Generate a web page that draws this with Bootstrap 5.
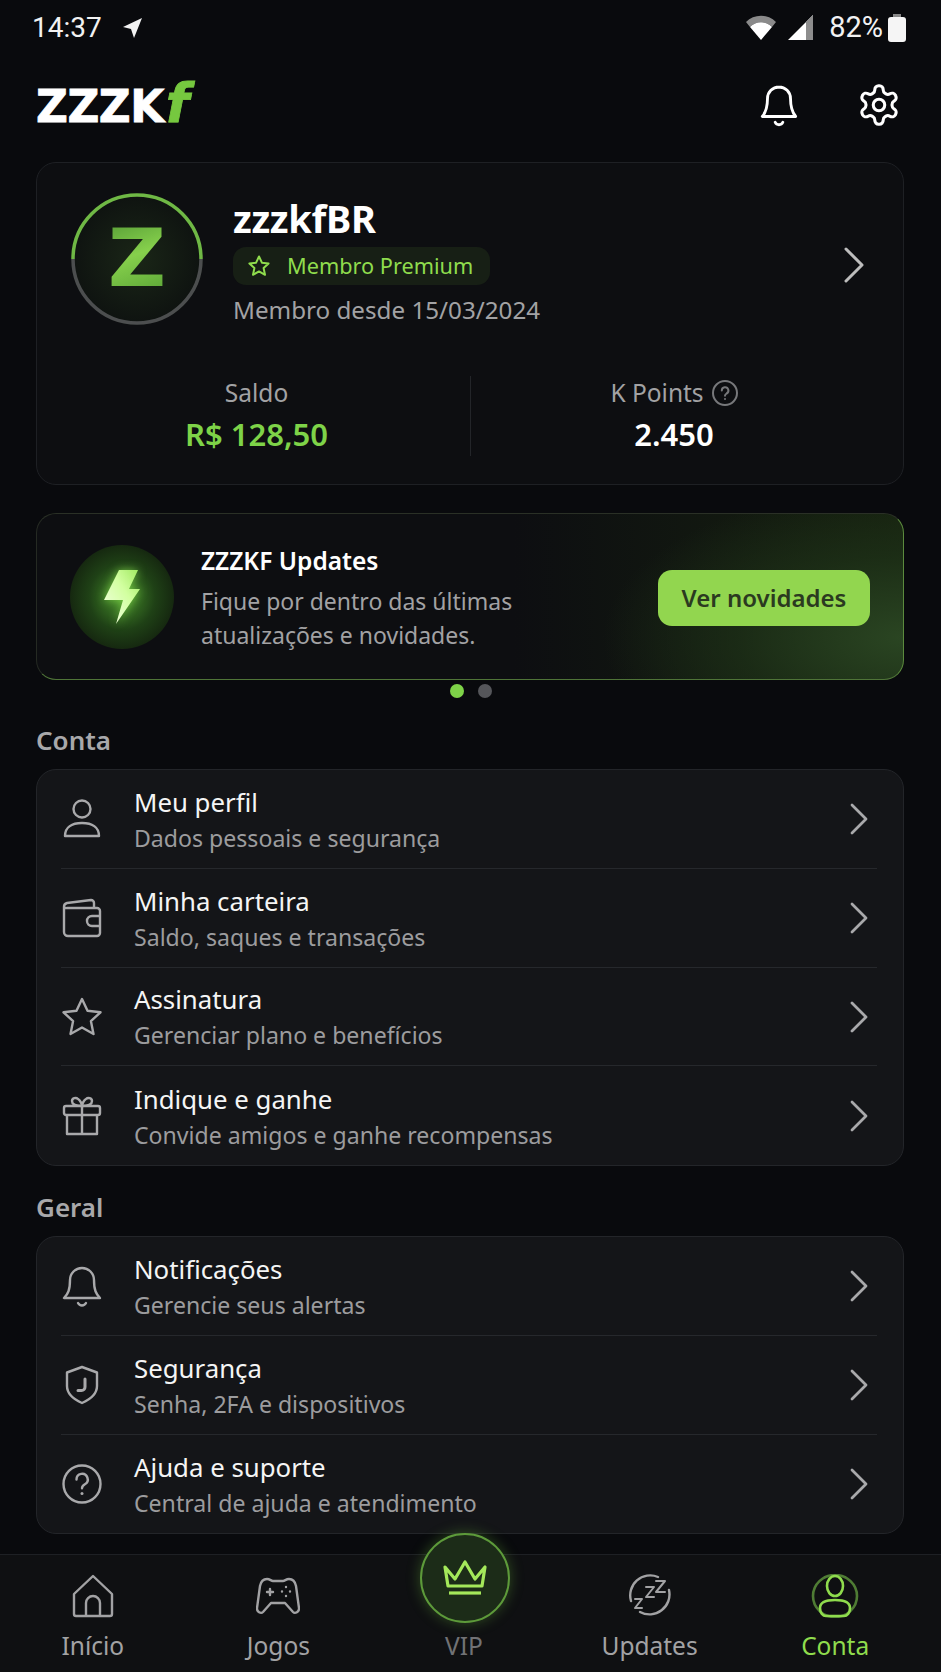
<!DOCTYPE html>
<html lang="pt-BR">
<head>
<meta charset="UTF-8">
<meta name="viewport" content="width=device-width, initial-scale=1.0">
<title>Conta</title>
<link href="https://cdn.jsdelivr.net/npm/bootstrap@5.3.0/dist/css/bootstrap.min.css" rel="stylesheet">
<style>
    body { background: #090a0d; color: #fff; font-family: "Noto Sans", sans-serif; width: 941px; height: 1672px; overflow: hidden; }
    svg { display: block; flex-shrink: 0; }
    .app-shell { height: 1672px; position: relative; }
    .status-bar { height: 55px; padding: 0 34px 0 32px; font-family: Roboto, sans-serif; font-size: 28px; color: #f2f2f2; }
    .status-pct { font-size: 29px; margin-left: 15px; }
    .gps-arrow { margin-left: 18px; }
    .signal-ico { margin-left: 11px; }
    .top-head { height: 107px; padding: 4px 36px 12px 36px; }
    .logo-mark { font-family: "DejaVu Sans", sans-serif; font-weight: 700; font-size: 44px; line-height: 54px; letter-spacing: -.5px; text-transform: uppercase; margin-top: 4px; -webkit-text-stroke: .8px #fff; }
    .logo-mark i { color: #76c83f; font-size: 54px; line-height: 40px; text-transform: none; margin-left: 2px; -webkit-text-stroke: .8px #76c83f; }
    .head-icons { gap: 54px; padding-right: 3px; }
    .panel-dark { background: #0d0e11; border: 1px solid #1e2024; border-radius: 20px; margin: 0 37px 0 36px; }
    .profile-panel { height: 323px; padding: 30px 37px 0 34px; }
    .avatar-ring { width: 132px; height: 132px; position: relative; background: radial-gradient(circle, #1a2617 0, #0e1210 72%); border-radius: 50%; }
    .avatar-ring svg { position: absolute; inset: 0; }
    .avatar-z { font-family: "DejaVu Sans", sans-serif; font-weight: 700; font-size: 80px; line-height: 1; background: linear-gradient(160deg, #5fa63a 10%, #86d04c 45%, #5ea838 90%); -webkit-background-clip: text; background-clip: text; color: transparent; }
    .user-block { margin-left: 30px; padding-top: 2px; }
    .user-name { font-size: 38px; font-weight: 700; line-height: 46px; letter-spacing: -.3px; }
    .premium-tag { background: #171f15; border-radius: 13px; height: 38px; width: 257px; padding-left: 14px; gap: 16px; color: #8fdc4d; font-size: 21.7px; margin-top: 6px; }
    .since-line { font-size: 24.2px; color: #a2a2a4; line-height: 30px; margin-top: 10px; }
    .chevron-big { margin-top: 52px; }
    .stat-row { margin: 51px 0 0 -28px; }
    .stat-cell { height: 80px; }
    .stat-left { width: 428px; border-right: 1px solid #232529; }
    .stat-right { width: 406px; }
    .stat-label { font-size: 24.5px; color: #a2a2a4; line-height: 34px; }
    .stat-value { font-size: 31px; font-weight: 600; line-height: 42px; margin-top: 3px; }
    .text-lime { color: #7ed348; }
    .promo-panel { margin-top: 28px; height: 167px; padding: 0 33px 0 33px; border-color: #2a3026 #5b8a3d #4f7438 #252a23; background: radial-gradient(ellipse 300px 150px at 100% 75%, #2a4522 0, rgba(30, 50, 24, .7) 55%, rgba(13, 14, 17, 0) 100%), linear-gradient(90deg, #0d0e11 55%, #16210f 100%); }
    .bolt-disc { width: 104px; height: 104px; border-radius: 50%; background: radial-gradient(circle, #47902b 0, #1f4116 45%, #14240f 75%, #0f170d 100%); }
    .bolt-disc svg { filter: drop-shadow(0 0 5px rgba(140, 230, 80, .7)); }
    .promo-text { margin-left: 27px; width: 440px; padding-top: 4px; }
    .promo-title { font-size: 24.5px; font-weight: 600; line-height: 32px; }
    .promo-sub { font-size: 23px; color: #a2a2a4; line-height: 34px; margin-top: 7px; }
    .novidades-btn { width: 212px; height: 56px; background: #92d64f; border: 0; border-radius: 14px; color: #2b3a20; font-size: 24px; font-weight: 600; margin-left: auto; margin-top: 2px; padding: 0; }
    .slide-dots { gap: 14px; margin-top: 4px; height: 14px; }
    .slide-dots span { width: 14px; height: 14px; border-radius: 50%; background: #55565a; }
    .slide-dots .on { background: #7ed348; }
    .group-title { font-size: 26px; font-weight: 600; color: #a8a8aa; margin: 25px 36px 0; line-height: 35px; height: 46px; }
    .group-second { margin-top: 24px; }
    .menu-panel { background: #141518; border: 1px solid #232529; border-radius: 20px; margin: 0 37px 0 36px; padding: 0 26px 0 24px; }
    .menu-row { height: 98.75px; border-bottom: 1px solid #26282c; padding-top: 1px; }
    .menu-row:last-child { border-bottom: 0; }
    .row-ico { width: 42px; margin-right: 31px; }
    .row-title { font-size: 25.8px; line-height: 34px; color: #f5f5f5; }
    .row-sub { font-size: 23.1px; line-height: 32px; color: #9c9c9e; margin-top: 3px; }
    .row-go { margin-left: auto; margin-right: 8px; }
    .bottom-nav { position: absolute; left: 0; right: 0; top: 1554px; height: 118px; background: #0f1012; border-top: 1px solid #1e2024; }
    .nav-cell { width: 185.6px; padding-top: 19px; color: #a2a2a4; font-size: 24.5px; }
    .nav-cell svg { height: 44px; }
    .nav-cell span { line-height: 34px; margin-top: 11px; }
    .nav-cell.active { color: #8fdc4d; }
    .vip-label { color: #717275; }
    .vip-disc { position: absolute; left: 420px; top: -22px; width: 90px; height: 90px; border-radius: 50%; background: #1c2c18; border: 2px solid #5d9a3a; box-shadow: 0 0 14px rgba(110, 190, 60, .35); }
</style>
</head>
<body>
<div class="app-shell">
    <div class="status-bar d-flex align-items-center">
        <span>14:37</span>
        <svg class="gps-arrow" width="24" height="24" viewBox="0 0 24 24"><path d="M22 2 3 11l8 2 3 9z" fill="#f2f2f2"/></svg>
        <div class="ms-auto d-flex align-items-center">
            <svg width="32" height="28" viewBox="0 0 32 28"><path d="M1 8a21 21 0 0 1 30 0l-4 5a15 15 0 0 0-22 0z" fill="#8a8a8a"/><path d="M5 13a15 15 0 0 1 22 0L16 26z" fill="#fff"/></svg>
            <svg class="signal-ico" width="26" height="28" viewBox="0 0 26 28"><path d="M0 26 25 1v25z" fill="#fff"/><path d="M18 8 25 1v25h-7z" fill="#8d8d8d"/></svg>
            <span class="status-pct">82%</span>
            <svg class="ms-1" width="20" height="30" viewBox="0 0 20 30"><path d="M6 1h8v3H6z" fill="#888"/><rect x="1" y="4" width="18" height="25" rx="3" fill="#f5f5f5"/></svg>
        </div>
    </div>

    <div class="top-head d-flex align-items-center justify-content-between">
        <div class="logo-mark">zzzk<i>f</i></div>
        <div class="head-icons d-flex align-items-center">
            <svg width="46" height="46" viewBox="0 0 24 24" fill="none" stroke="#fff" stroke-width="1.5" stroke-linecap="round" stroke-linejoin="round"><path d="M12 2.600a6 6 0 0 0-6 6c0 5.500-1.200 7.600-2.700 9.400h17.400c-1.500-1.800-2.700-3.900-2.700-9.400a6 6 0 0 0-6-6z"/><path d="M10 21a2.200 2.200 0 0 0 4 0"/></svg>
            <svg width="46" height="46" viewBox="0 0 24 24" fill="none" stroke="#fff" stroke-width="1.6" stroke-linecap="round" stroke-linejoin="round"><circle cx="12" cy="12" r="3"/><path d="M12.200 2h-.4a2 2 0 0 0-2 2v.2a2 2 0 0 1-1 1.700l-.4.300a2 2 0 0 1-2 0l-.2-.1a2 2 0 0 0-2.700.7l-.2.400a2 2 0 0 0 .7 2.700l.2.100a2 2 0 0 1 1 1.700v.6a2 2 0 0 1-1 1.700l-.2.100a2 2 0 0 0-.7 2.700l.2.400a2 2 0 0 0 2.700.7l.2-.1a2 2 0 0 1 2 0l.4.300a2 2 0 0 1 1 1.700v.2a2 2 0 0 0 2 2h.4a2 2 0 0 0 2-2v-.2a2 2 0 0 1 1-1.700l.4-.3a2 2 0 0 1 2 0l.2.100a2 2 0 0 0 2.700-.7l.2-.4a2 2 0 0 0-.7-2.700l-.2-.1a2 2 0 0 1-1-1.700v-.6a2 2 0 0 1 1-1.700l.2-.1a2 2 0 0 0 .7-2.700l-.2-.4a2 2 0 0 0-2.700-.7l-.2.100a2 2 0 0 1-2 0l-.4-.3a2 2 0 0 1-1-1.700V4a2 2 0 0 0-2-2z"/></svg>
        </div>
    </div>

    <section class="panel-dark profile-panel">
        <div class="d-flex align-items-start">
            <div class="avatar-ring d-flex align-items-center justify-content-center">
                <svg width="132" height="132" viewBox="0 0 132 132" fill="none" stroke-width="3.500"><path d="M2 66a64 64 0 0 1 128 0" stroke="#6fb845"/><path d="M2 66a64 64 0 0 0 128 0" stroke="#4c4e4f"/></svg>
                <span class="avatar-z">Z</span>
            </div>
            <div class="user-block">
                <div class="user-name">zzzkfBR</div>
                <div class="premium-tag d-flex align-items-center">
                    <svg width="24" height="24" viewBox="0 0 24 24" fill="none" stroke="#8fdc4d" stroke-width="2" stroke-linejoin="round"><path d="m12 2.500 2.900 6.200 6.700.8-5 4.600 1.400 6.700-6-3.400-6 3.400 1.400-6.700-5-4.600 6.700-.8z"/></svg>
                    <span>Membro Premium</span>
                </div>
                <div class="since-line">Membro desde 15/03/2024</div>
            </div>
            <svg class="ms-auto chevron-big" width="24" height="40" viewBox="0 0 24 40" fill="none" stroke="#bdbdbd" stroke-width="3" stroke-linecap="round" stroke-linejoin="round"><path d="m4 4 16 16L4 36"/></svg>
        </div>
        <div class="stat-row d-flex">
            <div class="stat-cell stat-left flex-shrink-0 text-center">
                <div class="stat-label">Saldo</div>
                <div class="stat-value text-lime">R$ 128,50</div>
            </div>
            <div class="stat-cell stat-right flex-shrink-0 text-center">
                <div class="stat-label d-flex align-items-center justify-content-center gap-2">K Points
                    <svg width="26" height="26" viewBox="0 0 26 26" fill="none" stroke="#77787b" stroke-width="2" stroke-linecap="round"><circle cx="13" cy="13" r="12"/><path d="M9.800 10.500a3.300 3.300 0 1 1 4.800 3c-1 .6-1.600 1.200-1.600 2.200"/><path d="M13 19v.1"/></svg>
                </div>
                <div class="stat-value">2.450</div>
            </div>
        </div>
    </section>

    <section class="panel-dark promo-panel d-flex align-items-center">
        <div class="bolt-disc d-flex align-items-center justify-content-center">
            <svg width="38" height="56" viewBox="0 0 38 56"><defs><linearGradient id="boltFill" x1="0" y1="1" x2="1" y2="0"><stop offset="0" stop-color="#f6ffe8"/><stop offset=".6" stop-color="#d2ffa0"/><stop offset="1" stop-color="#9ee85e"/></linearGradient></defs><path d="M16 1h19l-9 19h11L13 55l7-24H1z" fill="url(#boltFill)"/></svg>
        </div>
        <div class="promo-text">
            <div class="promo-title">ZZZKF Updates</div>
            <div class="promo-sub">Fique por dentro das últimas<br>atualizações e novidades.</div>
        </div>
        <button class="novidades-btn" type="button">Ver novidades</button>
    </section>
    <div class="slide-dots d-flex justify-content-center"><span class="on"></span><span></span></div>

    <div class="group-title">Conta</div>
    <section class="menu-panel">
        <div class="menu-row d-flex align-items-center">
            <div class="row-ico"><svg width="42" height="42" viewBox="0 0 42 42" fill="none" stroke="#a9a9ab" stroke-width="2.400" stroke-linejoin="round"><circle cx="21" cy="11" r="8.500"/><path d="M4 38c0-9 7-13 17-13s17 4 17 13z"/></svg></div>
            <div><div class="row-title">Meu perfil</div><div class="row-sub">Dados pessoais e segurança</div></div>
            <svg class="row-go" width="20" height="34" viewBox="0 0 20 34" fill="none" stroke="#a9a9ab" stroke-width="2.800" stroke-linecap="round" stroke-linejoin="round"><path d="m3 3 14 14L3 31"/></svg>
        </div>
        <div class="menu-row d-flex align-items-center">
            <div class="row-ico"><svg width="42" height="42" viewBox="0 0 42 42" fill="none" stroke="#a9a9ab" stroke-width="2.400" stroke-linejoin="round"><path d="M3 10v25a4 4 0 0 0 4 4h29a3 3 0 0 0 3-3V14a3 3 0 0 0-3-3H6a3 3 0 0 1-3-1 4 4 0 0 1 3-4l24-3a3 3 0 0 1 3 3v5"/><path d="M39 19h-8a5 5 0 0 0 0 10h8"/></svg></div>
            <div><div class="row-title">Minha carteira</div><div class="row-sub">Saldo, saques e transações</div></div>
            <svg class="row-go" width="20" height="34" viewBox="0 0 20 34" fill="none" stroke="#a9a9ab" stroke-width="2.800" stroke-linecap="round" stroke-linejoin="round"><path d="m3 3 14 14L3 31"/></svg>
        </div>
        <div class="menu-row d-flex align-items-center">
            <div class="row-ico"><svg width="42" height="42" viewBox="0 0 42 42" fill="none" stroke="#a9a9ab" stroke-width="2.400" stroke-linejoin="round"><path d="m21 3 5.500 11.800 13 1.500-9.600 8.800 2.600 12.900L21 31.500 9.500 38l2.600-12.900-9.600-8.800 13-1.500z"/></svg></div>
            <div><div class="row-title">Assinatura</div><div class="row-sub">Gerenciar plano e benefícios</div></div>
            <svg class="row-go" width="20" height="34" viewBox="0 0 20 34" fill="none" stroke="#a9a9ab" stroke-width="2.800" stroke-linecap="round" stroke-linejoin="round"><path d="m3 3 14 14L3 31"/></svg>
        </div>
        <div class="menu-row d-flex align-items-center">
            <div class="row-ico"><svg width="42" height="42" viewBox="0 0 42 42" fill="none" stroke="#a9a9ab" stroke-width="2.400" stroke-linejoin="round"><rect x="3" y="11" width="36" height="9" rx="2"/><path d="M6 20v19h30V20M21 11v28"/><path d="M21 11c-4 0-10-1-10-5 0-3 4-4 6-2 2 1 4 5 4 7zm0 0c4 0 10-1 10-5 0-3-4-4-6-2-2 1-4 5-4 7z"/></svg></div>
            <div><div class="row-title">Indique e ganhe</div><div class="row-sub">Convide amigos e ganhe recompensas</div></div>
            <svg class="row-go" width="20" height="34" viewBox="0 0 20 34" fill="none" stroke="#a9a9ab" stroke-width="2.800" stroke-linecap="round" stroke-linejoin="round"><path d="m3 3 14 14L3 31"/></svg>
        </div>
    </section>

    <div class="group-title group-second">Geral</div>
    <section class="menu-panel">
        <div class="menu-row d-flex align-items-center">
            <div class="row-ico"><svg width="42" height="42" viewBox="0 0 42 42" fill="none" stroke="#a9a9ab" stroke-width="2.400" stroke-linecap="round" stroke-linejoin="round"><path d="M21 3a12 12 0 0 0-12 12c0 10-2 14-6 18h36c-4-4-6-8-6-18A12 12 0 0 0 21 3z"/><path d="M17 38a4.500 4.500 0 0 0 8 0"/></svg></div>
            <div><div class="row-title">Notificações</div><div class="row-sub">Gerencie seus alertas</div></div>
            <svg class="row-go" width="20" height="34" viewBox="0 0 20 34" fill="none" stroke="#a9a9ab" stroke-width="2.800" stroke-linecap="round" stroke-linejoin="round"><path d="m3 3 14 14L3 31"/></svg>
        </div>
        <div class="menu-row d-flex align-items-center">
            <div class="row-ico"><svg width="42" height="42" viewBox="0 0 42 42" fill="none" stroke="#a9a9ab" stroke-width="2.400" stroke-linecap="round" stroke-linejoin="round"><path d="M21 3 36 8.500V22c0 8-6 13-15 17C12 35 6 30 6 22V8.500z"/><path d="M24 15v8a3.500 3.500 0 0 1-3.500 3.500H17" stroke-width="3"/></svg></div>
            <div><div class="row-title">Segurança</div><div class="row-sub">Senha, 2FA e dispositivos</div></div>
            <svg class="row-go" width="20" height="34" viewBox="0 0 20 34" fill="none" stroke="#a9a9ab" stroke-width="2.800" stroke-linecap="round" stroke-linejoin="round"><path d="m3 3 14 14L3 31"/></svg>
        </div>
        <div class="menu-row d-flex align-items-center">
            <div class="row-ico"><svg width="42" height="42" viewBox="0 0 42 42" fill="none" stroke="#a9a9ab" stroke-width="2.400" stroke-linecap="round"><circle cx="21" cy="21" r="18.500"/><path d="M15.500 16.500a5.600 5.600 0 1 1 8.400 4.800c-1.800 1-2.900 2-2.900 4"/><path d="M21 30.500v.1" stroke-width="3"/></svg></div>
            <div><div class="row-title">Ajuda e suporte</div><div class="row-sub">Central de ajuda e atendimento</div></div>
            <svg class="row-go" width="20" height="34" viewBox="0 0 20 34" fill="none" stroke="#a9a9ab" stroke-width="2.800" stroke-linecap="round" stroke-linejoin="round"><path d="m3 3 14 14L3 31"/></svg>
        </div>
    </section>

    <nav class="bottom-nav d-flex">
        <div class="nav-cell d-flex flex-column align-items-center">
            <svg width="42" height="44" viewBox="0 0 42 44" fill="none" stroke="#a2a2a4" stroke-width="2.400" stroke-linejoin="round"><path d="M21 2 2 20v20a2 2 0 0 0 2 2h34a2 2 0 0 0 2-2V20z"/><path d="M14 42V29a7 7 0 0 1 14 0v13"/></svg>
            <span>Início</span>
        </div>
        <div class="nav-cell d-flex flex-column align-items-center">
            <svg width="44" height="44" viewBox="0 0 44 44" fill="none" stroke="#a2a2a4" stroke-width="2.400" stroke-linejoin="round"><path d="M11 5c3 0 4 2 6 2h10c2 0 3-2 6-2 4 0 6 2 7 7l3 22c.4 4-4 6-6 4l-8-9H15l-8 9c-2 2-6.400 0-6-4l3-22c1-5 3-7 7-7z"/><path d="M11 18h6M14 15v6M30 13v.1M30 22v.1M26 17.500v.1M34 17.500v.1" stroke-linecap="round"/></svg>
            <span>Jogos</span>
        </div>
        <div class="nav-cell d-flex flex-column align-items-center position-relative">
            <svg width="44" height="44" viewBox="0 0 44 44"></svg>
            <span class="vip-label">VIP</span>
        </div>
        <div class="nav-cell d-flex flex-column align-items-center">
            <svg width="44" height="44" viewBox="0 0 44 44" fill="none" stroke="#a2a2a4" stroke-width="2.400" stroke-linecap="round" stroke-linejoin="round"><path d="M3 27A20 20 0 0 1 30 3M41 16a20 20 0 0 1-29 22"/><path d="M7 25h7l-7 9h7M18 13h8l-8 10h8M28 7h9l-9 11h9" stroke-width="2"/></svg>
            <span>Updates</span>
        </div>
        <div class="nav-cell active d-flex flex-column align-items-center">
            <svg width="48" height="44" viewBox="0 0 48 44" fill="none" stroke="#8fdc4d" stroke-width="2.600" stroke-linejoin="round"><ellipse cx="24" cy="22" rx="22" ry="21" stroke="#4f7c34"/><ellipse cx="24" cy="12" rx="8" ry="10"/><path d="M9 34c0-6 6-8 15-8s15 2 15 8c0 5-3 8-6 8H15c-3 0-6-3-6-8z"/></svg>
            <span>Conta</span>
        </div>
        <div class="vip-disc d-flex align-items-center justify-content-center">
            <svg width="44" height="38" viewBox="0 0 44 38" fill="none" stroke="#a4e85a" stroke-width="3.200" stroke-linejoin="round"><path d="M2 8 12 20 22 3 32 20 42 8l-3 19H5z"/><path d="M6 34h32"/></svg>
        </div>
    </nav>
</div>
<script src="https://cdn.jsdelivr.net/npm/bootstrap@5.3.0/dist/js/bootstrap.bundle.min.js"></script>
</body>
</html>
